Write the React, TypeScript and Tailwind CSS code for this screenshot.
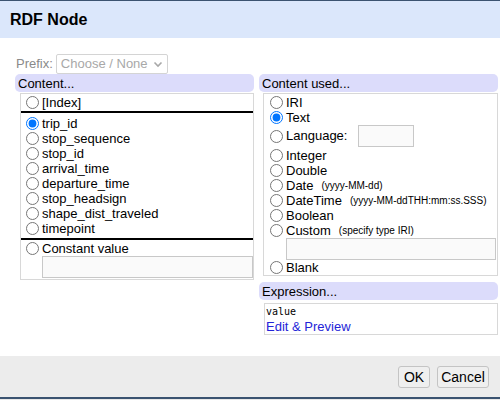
import React from 'react';

const columns = [
  'trip_id',
  'stop_sequence',
  'stop_id',
  'arrival_time',
  'departure_time',
  'stop_headsign',
  'shape_dist_traveled',
  'timepoint',
];

const Radio: React.FC<{ name: string; checked?: boolean; className?: string }> = ({ name, checked, className }) => (
  <input
    type="radio"
    name={name}
    defaultChecked={checked}
    className={`w-[13px] h-[13px] m-0 shrink-0 ${className ?? ''}`}
  />
);

const Bar: React.FC<{ title: string }> = ({ title }) => (
  <div className="h-[18px] bg-[#dcdcfb] rounded-[5px] pl-[3px] flex items-center leading-none">{title}</div>
);

const Row: React.FC<{ label: string; name: string; checked?: boolean; note?: string }> = ({ label, name, checked, note }) => (
  <label className="h-[15px] flex items-center gap-[3px]">
    <Radio name={name} checked={checked} />
    <span>{label}</span>
    {note && <span className="text-[10px] ml-[5px]">{note}</span>}
  </label>
);

export default function App() {
  return (
    <div className="w-[500px] h-[400px] overflow-hidden bg-white text-[13px] text-black font-['Liberation_Sans',Arial,sans-serif] flex flex-col">
      {/* title */}
      <div className="h-[1px] bg-[#3b5370]" />
      <div className="h-[37px] bg-[#dbe7fb] px-[10px] flex items-center text-[16px] font-bold">RDF Node</div>

      {/* body */}
      <div className="h-[318px] pt-[16px] pl-[15px] pr-[2px]">
        <div className="h-[20px] flex items-center pl-[1px]">
          <span className="text-[#8a8a8a]">Prefix:</span>
          <div className="ml-[3px] w-[112px] h-[20px] border border-[#d4d4d4] rounded-[2px] flex items-center justify-between px-[4px] text-[#a8a8a8]">
            <span>Choose / None</span>
            <svg width="10" height="10" viewBox="0 0 10 10">
              <path d="M1.5 3.5 L5 7 L8.5 3.5" fill="none" stroke="#a8a8a8" strokeWidth="1.6" />
            </svg>
          </div>
        </div>

        <div className="flex gap-[5px]">
          {/* left column */}
          <div className="w-[239px]">
            <Bar title="Content..." />
            <div className="ml-[5px] mt-[1px] border border-[#d8d8d8] pt-[1px] pl-[5px] h-[187px] flex flex-col">
              <Row label="[Index]" name="col" />
              <div className="h-[2px] bg-black -ml-[5px] mt-[1px] mb-[3px]" />
              {columns.map((c) => (
                <Row key={c} label={c} name="col" checked={c === 'trip_id'} />
              ))}
              <div className="h-[2px] bg-black -ml-[5px] mt-[2px] mb-[1px]" />
              <Row label="Constant value" name="col" />
              <input className="ml-[16px] h-[22px] border border-[#c8c8c8] bg-[#fafafa]" />
            </div>
          </div>

          {/* right column */}
          <div className="w-[239px]">
            <Bar title="Content used..." />
            <div className="ml-[4px] mt-[1px] border border-[#d8d8d8] pt-[1px] pl-[6px] h-[183px] flex flex-col">
              <Row label="IRI" name="type" />
              <Row label="Text" name="type" checked />
              <label className="h-[22px] flex items-center gap-[3px]">
                <Radio name="type" />
                <span>Language:</span>
                <input className="ml-[8px] w-[56px] h-[22px] border border-[#c8c8c8] bg-[#fafafa]" />
              </label>
              <div className="h-[1px]" />
              <Row label="Integer" name="type" />
              <Row label="Double" name="type" />
              <Row label="Date" name="type" note="(yyyy-MM-dd)" />
              <Row label="DateTime" name="type" note="(yyyy-MM-ddTHH:mm:ss.SSS)" />
              <Row label="Boolean" name="type" />
              <Row label="Custom" name="type" note="(specify type IRI)" />
              <input className="ml-[16px] mr-[1px] h-[23px] border border-[#c8c8c8] bg-[#fafafa]" />
              <Row label="Blank" name="type" />
            </div>

            <div className="mt-[6px]">
              <Bar title="Expression..." />
            </div>
            <div className="ml-[5px] mt-[3px] border border-[#d8d8d8] h-[32px] pl-[1px] flex flex-col">
              <span className="font-['DejaVu_Sans_Mono',monospace] text-[10px] leading-[14px] mt-[1px]">value</span>
              <a href="#" className="text-[#2424d8] leading-[15px]">Edit &amp; Preview</a>
            </div>
          </div>
        </div>
      </div>

      {/* footer */}
      <div className="h-[41px] bg-[#ececec] flex items-center justify-end gap-[7px] pr-[11px] pt-[1px]">
        <button className="h-[22px] w-[32px] border border-[#c4c4c4] rounded-[3px] bg-[#efefef] text-[14px]">OK</button>
        <button className="h-[22px] w-[52px] border border-[#c4c4c4] rounded-[3px] bg-[#efefef] text-[14px]">Cancel</button>
      </div>
      <div className="h-[2px] bg-[#3b5370]" />
      <div className="h-[1px] bg-[#e8e8e8]" />
    </div>
  );
}
